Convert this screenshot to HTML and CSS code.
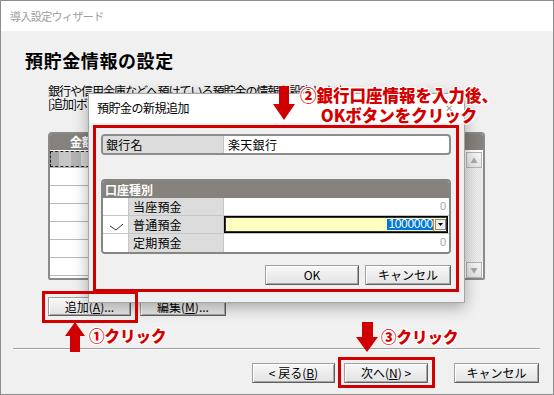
FILE: index.html
```html
<!DOCTYPE html>
<html lang="ja">
<head>
<meta charset="utf-8">
<title>導入設定ウィザード</title>
<link rel="stylesheet" href="styles.css">
</head>
<body>
<div class="window">
  <div class="titlebar">導入設定ウィザード</div>
  <div class="content">
    <h1 class="heading">預貯金情報の設定</h1>
    <p class="desc">銀行や信用金庫などへ預けている預貯金の情報を設定します。<br>[追加]ボタンをクリックして、口座を登録してください。</p>
    <div class="list">
      <div class="list-main">
        <div class="list-head"><span class="col-amount">金額</span></div>
        <div class="list-row"><span class="cell-sel"></span></div>
        <div class="list-row"></div>
        <div class="list-row"></div>
        <div class="list-row"></div>
        <div class="list-row"></div>
        <div class="list-row"></div>
        <div class="list-row"></div>
      </div>
      <div class="scrollbar">
        <div class="sb-cap"></div>
        <div class="sb-btn">&#9650;</div>
        <div class="sb-track"></div>
        <div class="sb-btn">&#9660;</div>
      </div>
    </div>
    <div class="list-buttons">
      <button class="btn btn-add">追加(<u>A</u>)...</button>
      <button class="btn btn-edit">編集(<u>M</u>)...</button>
    </div>
    <div class="separator"></div>
    <div class="nav-buttons">
      <button class="btn nav-back">&lt; 戻る(<u>B</u>)</button>
      <button class="btn nav-next">次へ(<u>N</u>) &gt;</button>
      <button class="btn nav-cancel">キャンセル</button>
    </div>
  </div>

  <div class="dialog">
    <div class="dlg-title">預貯金の新規追加<span class="dlg-close">&#x2715;</span></div>
    <div class="dlg-body">
      <div class="bank-row">
        <div class="bank-lbl">銀行名</div>
        <div class="bank-val">楽天銀行</div>
      </div>
      <div class="group">
        <div class="group-head">口座種別</div>
        <div class="grow">
          <div class="chk"></div>
          <div class="glbl">当座預金</div>
          <div class="gval"><span class="zero">0</span></div>
        </div>
        <div class="grow">
          <div class="chk"><svg width="26" height="17" viewBox="0 0 26 17"><polyline points="7,10 13,14 20,8" fill="none" stroke="#333" stroke-width="1"/></svg></div>
          <div class="glbl">普通預金</div>
          <div class="gval">
            <div class="edit"><span class="edit-text"><span class="sel">1000000</span><span class="caret"></span></span><span class="dd"><svg width="5" height="3" viewBox="0 0 5 3"><polygon points="0,0 5,0 2.5,3" fill="#000"/></svg></span></div>
          </div>
        </div>
        <div class="grow last">
          <div class="chk"></div>
          <div class="glbl">定期預金</div>
          <div class="gval"><span class="zero">0</span></div>
        </div>
      </div>
      <div class="dlg-buttons">
        <button class="btn dlg-ok">OK</button>
        <button class="btn dlg-cancel">キャンセル</button>
      </div>
    </div>
  </div>

  <div class="hl hl-dialog"></div>
  <div class="hl hl-add"></div>
  <div class="hl hl-next"></div>

  <svg class="arrow arrow2" width="22" height="34" viewBox="0 0 22 34"><path d="M6 0H16V18H22L11 34L0 18H6Z" fill="#d00000"/></svg>
  <div class="note note2">②銀行口座情報を入力後、<br>OKボタンをクリック</div>

  <svg class="arrow arrow1" width="20" height="30" viewBox="0 0 20 30"><path d="M10 0L20 14H15V30H5V14H0Z" fill="#d00000"/></svg>
  <div class="note note1">①クリック</div>

  <svg class="arrow arrow3" width="22" height="30" viewBox="0 0 22 30"><path d="M6 0H17V15H22L11 30L0 15H6Z" fill="#d00000"/></svg>
  <div class="note note3">③クリック</div>
</div>
</body>
</html>
```

FILE: styles.css
```css
* { box-sizing: border-box; }
html, body { margin: 0; padding: 0; }
body {
  width: 554px;
  height: 395px;
  overflow: hidden;
  background: #fff;
  font-family: "Noto Sans CJK JP", "Noto Sans", sans-serif;
  font-size: 12px;
  color: #000;
}
.window {
  position: relative;
  width: 554px;
  height: 395px;
  border: 1px solid #8c8c8c;
  background: #f0f0f0;
  display: flex;
  flex-direction: column;
  overflow: hidden;
}
.titlebar {
  flex: none;
  height: 30px;
  background: #fff;
  color: #9d9d9d;
  font-size: 11px;
  letter-spacing: -0.6px;
  line-height: 30px;
  padding-left: 9px;
}
.content {
  flex: 1;
  display: flex;
  flex-direction: column;
  align-items: flex-start;
}
.heading {
  margin: 18px 0 0 24px;
  font-size: 18px;
  line-height: 22px;
  font-weight: bold;
  letter-spacing: 0.6px;
}
.desc {
  margin: 13px 0 0 47px;
  font-size: 12px;
  letter-spacing: -1px;
  line-height: 13px;
  white-space: nowrap;
}
.list {
  margin: 22px 0 0 47px;
  width: 437px;
  height: 148px;
  border: 2px solid #8a8a8a;
  border-radius: 4px 4px 2px 2px;
  background: #fff;
  display: flex;
  overflow: hidden;
}
.list-main { flex: 1; display: flex; flex-direction: column; }
.list-head {
  height: 16px;
  background: #85827d;
  color: #fff;
  font-weight: bold;
  line-height: 16px;
  padding-left: 20px;
}
.list-row {
  height: 18px;
  border-bottom: 1px solid #b8b8b8;
  display: flex;
  padding: 1px 0 0 0;
}
.cell-sel {
  width: 60px;
  height: 16px;
  border: 1px dashed #222;
  background: linear-gradient(90deg, #a9a9a9 0 8px, #c6c6c6 8px 20px, #b4b4b4 20px 30px, #d2d2d2 30px 40px, #a0a0a0 40px);
}
.scrollbar {
  width: 19px;
  display: flex;
  flex-direction: column;
  border-left: 1px solid #c8c8c8;
}
.sb-cap { height: 16px; background: #85827d; }
.sb-btn {
  height: 16px;
  margin: 2px 1px 0 1px;
  border: 1px solid #b4b4b4;
  background: linear-gradient(#f6f6f6, #e6e6e6);
  color: #a8a8a8;
  font-size: 7px;
  line-height: 14px;
  text-align: center;
}
.sb-btn:last-child { margin: 0 1px 0 1px; }
.sb-track {
  flex: 1;
  background: repeating-conic-gradient(#f2f2f2 0 25%, #e2e2e2 0 50%) 0 0 / 2px 2px;
}
.btn {
  font-family: "Noto Sans CJK JP", "Noto Sans", sans-serif;
  font-size: 12px;
  color: #000;
  padding: 0;
  margin: 0;
  display: flex;
  align-items: center;
  justify-content: center;
  border: 1px solid #a0a0a0;
  border-right-color: #5f5f5f;
  border-bottom-color: #5f5f5f;
  background: linear-gradient(#f7f7f7, #e3e3e3);
  box-shadow: inset 1px 1px 0 #fff, inset -1px -1px 0 #a6a6a6;
  line-height: 1;
}
.btn u { text-underline-offset: 1px; }
.list-buttons {
  margin: 17px 0 0 47px;
  display: flex;
  gap: 9px;
}
.btn-add { width: 83px; height: 19px; }
.btn-edit { width: 86px; height: 19px; }
.separator {
  margin: 32px 0 0 12px;
  width: 527px;
  height: 2px;
  border-top: 1px solid #a0a0a0;
  border-bottom: 1px solid #fff;
}
.nav-buttons {
  margin: 13px 0 0 251px;
  display: flex;
}
.nav-buttons .btn { height: 20px; }
.nav-back { width: 83px; }
.nav-next { width: 84px; margin-left: 9px; }
.nav-cancel { width: 85px; margin-left: 26px; }

.dialog {
  position: absolute;
  left: 87px;
  top: 92px;
  width: 377px;
  height: 210px;
  border: 1px solid #a4a4a4;
  background: #f0f0f0;
  box-shadow: 0 4px 14px rgba(0, 0, 0, 0.32);
  display: flex;
  flex-direction: column;
}
.dlg-title {
  position: relative;
  height: 29px;
  background: #fff;
  font-size: 12px;
  letter-spacing: -0.5px;
  line-height: 28px;
  padding-left: 8px;
}
.dlg-close {
  position: absolute;
  right: 12px;
  top: 0;
  color: #9a9a9a;
  font-size: 10px;
  line-height: 28px;
}
.dlg-body {
  padding: 11px 12px 0 12px;
  display: flex;
  flex-direction: column;
}
.bank-row {
  width: 350px;
  height: 21px;
  border: 2px solid #8d8d8d;
  border-radius: 4px;
  display: flex;
  overflow: hidden;
  background: #fff;
}
.bank-lbl {
  width: 121px;
  background: #dcdcdc;
  border-right: 1px solid #c4c4c4;
  padding-left: 3px;
  line-height: 17px;
  letter-spacing: 0.3px;
}
.bank-val {
  flex: 1;
  padding-left: 4px;
  line-height: 17px;
  letter-spacing: 0.3px;
}
.group {
  margin-top: 24px;
  width: 350px;
  border: 2px solid #878580;
  border-radius: 4px;
  overflow: hidden;
  background: #fff;
}
.group-head {
  height: 17px;
  background: #85827d;
  color: #fff;
  font-weight: bold;
  line-height: 17px;
  padding-left: 2px;
}
.grow {
  height: 18px;
  display: flex;
  border-bottom: 1px solid #c6c6c6;
}
.grow.last { border-bottom: none; }
.chk {
  width: 26px;
  border-right: 1px solid #c6c6c6;
  background: #fff;
}
.chk svg { display: block; }
.glbl {
  width: 95px;
  background: #dcdcdc;
  border-right: 1px solid #c6c6c6;
  padding-left: 4px;
  line-height: 17px;
  letter-spacing: 0.2px;
}
.gval {
  flex: 1;
  display: flex;
  justify-content: flex-end;
  align-items: stretch;
  background: #fff;
}
.zero {
  color: #a6a6a6;
  font-family: "Liberation Sans", sans-serif;
  font-size: 11px;
  line-height: 17px;
  padding-right: 3px;
}
.edit {
  flex: 1;
  display: flex;
  border: 1px solid #000;
  box-shadow: inset 0 0 0 1px #333;
  background: #ffffc0;
  margin-right: 1px;
}
.edit-text {
  flex: 1;
  display: flex;
  justify-content: flex-end;
  align-items: center;
}
.sel {
  background: #0078d7;
  color: #fff;
  font-family: "Liberation Sans", sans-serif;
  font-size: 12px;
  line-height: 11px;
  height: 11px;
  letter-spacing: -0.3px;
  padding-left: 1px;
}
.caret { width: 1px; height: 12px; background: #f08000; }
.dd {
  width: 11px;
  margin: 2px 1px 2px 1px;
  border: 1px solid #8a8a8a;
  background: #eeeeee;
  display: flex;
  align-items: center;
  justify-content: center;
}
.dd svg { display: block; }
.dlg-buttons {
  margin-top: 11px;
  width: 350px;
  display: flex;
  justify-content: flex-end;
  gap: 6px;
}
.dlg-buttons .btn { height: 20px; }
.dlg-ok { width: 94px; }
.dlg-cancel { width: 86px; }

.hl {
  position: absolute;
  border: 3px solid #d00000;
}
.hl-dialog { left: 92px; top: 124px; width: 366px; height: 167px; }
.hl-add { left: 41px; top: 290px; width: 96px; height: 32px; }
.hl-next { left: 337px; top: 356px; width: 97px; height: 31px; }

.arrow { position: absolute; display: block; }
.arrow2 { left: 272px; top: 85px; }
.arrow1 { left: 64px; top: 321px; }
.arrow3 { left: 355px; top: 321px; }

.note {
  position: absolute;
  color: #d40000;
  font-weight: 900;
  white-space: nowrap;
  text-shadow: 1px 0 0 #fff, -1px 0 0 #fff, 0 1px 0 #fff, 0 -1px 0 #fff,
    1px 1px 0 #fff, -1px -1px 0 #fff, 1px -1px 0 #fff, -1px 1px 0 #fff, 0 0 3px #fff;
}
.note2 {
  left: 296px;
  top: 84px;
  width: 204px;
  text-align: center;
  font-size: 16.5px;
  line-height: 20px;
}
.note1 { left: 88px; top: 324px; font-size: 15.5px; line-height: 20px; }
.note3 { left: 380px; top: 325px; font-size: 15.5px; line-height: 20px; }
```
